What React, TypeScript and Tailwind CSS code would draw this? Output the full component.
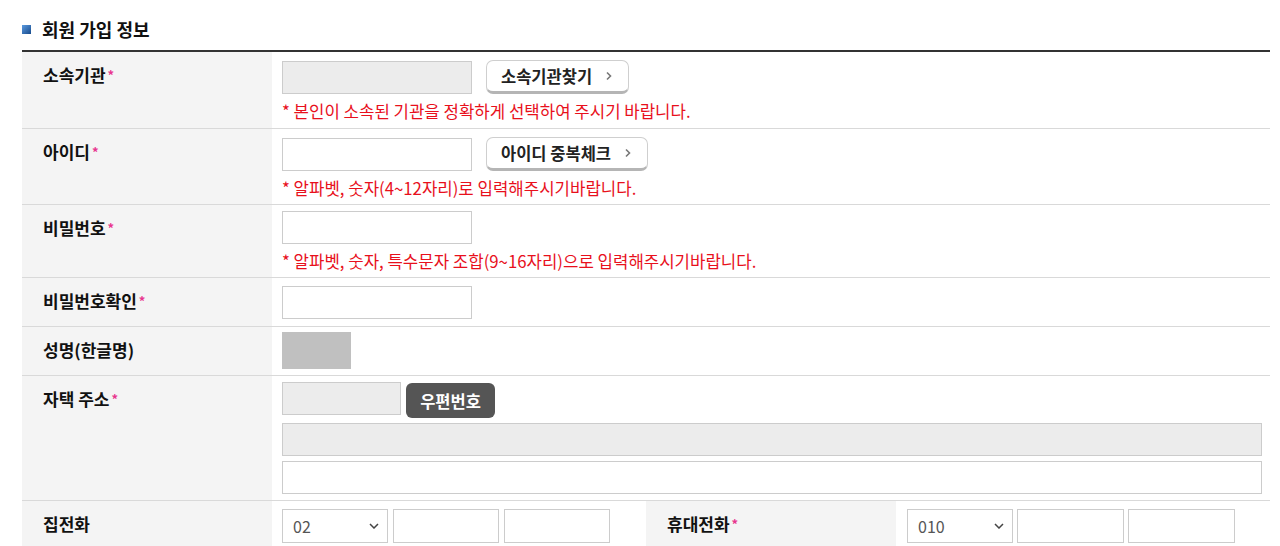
import React from "react";

const FONT = "font-['Noto_Sans_CJK_KR','Noto_Sans',sans-serif]";

function Req() {
  return <span className="ml-[2px] text-[13px] text-[#e8368f] relative top-[-2px]">*</span>;
}

function Chevron() {
  return (
    <svg width="8" height="10" viewBox="0 0 8 10" className="ml-[13px]">
      <polyline points="2,1.5 5.5,5 2,8.5" fill="none" stroke="#777" strokeWidth="1.6" />
    </svg>
  );
}

function WhiteBtn({ children }: { children: React.ReactNode }) {
  return (
    <button className="h-[34px] pl-[14px] pr-[15px] flex items-center bg-white border border-[#cfcfcf] border-b-[3px] border-b-[#b5b5b5] rounded-[7px] text-[16.5px] font-bold text-[#222] leading-[20px]">
      {children}
      <Chevron />
    </button>
  );
}

function Input({ w, gray, h = 33 }: { w: string; gray?: boolean; h?: number }) {
  return (
    <input
      readOnly={gray}
      style={{ height: h }}
      className={`${w} border border-[#cccccc] outline-none ${gray ? "bg-[#ececec]" : "bg-white"}`}
    />
  );
}

function Select({ value }: { value: string }) {
  return (
    <div className="relative w-[106px] h-[34px]">
      <select className="appearance-none w-full h-full border border-[#cccccc] bg-white pl-[10px] text-[16px] text-[#555] outline-none">
        <option>{value}</option>
      </select>
      <svg width="10" height="6" viewBox="0 0 10 6" className="absolute right-[9px] top-[14px] pointer-events-none">
        <polyline points="1,1 5,5 9,1" fill="none" stroke="#444" strokeWidth="1.5" />
      </svg>
    </div>
  );
}

function Help({ children }: { children: React.ReactNode }) {
  return <p className="mt-[7px] text-[16.75px] leading-[20px] text-[#e8101c]">* {children}</p>;
}

function Label({ children, req }: { children: React.ReactNode; req?: boolean }) {
  return (
    <div className="w-[250px] shrink-0 bg-[#f4f4f4] pl-[21px] pt-[13px] text-[17px] font-bold leading-[20px] text-[#111]">
      {children}
      {req && <Req />}
    </div>
  );
}

export default function App() {
  return (
    <div className={`w-[1280px] h-[546px] overflow-hidden bg-white ${FONT}`}>
      <div className="ml-[22px] w-[1248px]">
        <h2 className="h-[50px] pt-[8px] flex items-center text-[18px] font-bold text-[#111]">
          <span className="w-[9px] h-[9px] mr-[11px] bg-gradient-to-br from-[#5b9be0] to-[#174b8c]" />
          회원 가입 정보
        </h2>
        <div className="border-t-2 border-[#333]">
          {/* 소속기관 */}
          <div className="flex border-b border-[#d9d9d9]">
            <Label req>소속기관</Label>
            <div className="flex-1 pl-[10px] pt-[8px] pb-[7px]">
              <div className="flex items-center gap-[14px]">
                <Input w="w-[190px]" gray />
                <WhiteBtn>소속기관찾기</WhiteBtn>
              </div>
              <Help>본인이 소속된 기관을 정확하게 선택하여 주시기 바랍니다.</Help>
            </div>
          </div>
          {/* 아이디 */}
          <div className="flex border-b border-[#d9d9d9]">
            <Label req>아이디</Label>
            <div className="flex-1 pl-[10px] pt-[8px] pb-[6px]">
              <div className="flex items-center gap-[14px]">
                <Input w="w-[190px]" />
                <WhiteBtn>아이디 중복체크</WhiteBtn>
              </div>
              <Help>알파벳, 숫자(4~12자리)로 입력해주시기바랍니다.</Help>
            </div>
          </div>
          {/* 비밀번호 */}
          <div className="flex border-b border-[#d9d9d9]">
            <Label req>비밀번호</Label>
            <div className="flex-1 pl-[10px] pt-[6px] pb-[6px]">
              <Input w="w-[190px]" />
              <Help>알파벳, 숫자, 특수문자 조합(9~16자리)으로 입력해주시기바랍니다.</Help>
            </div>
          </div>
          {/* 비밀번호확인 */}
          <div className="flex border-b border-[#d9d9d9]">
            <Label req>비밀번호확인</Label>
            <div className="flex-1 pl-[10px] pt-[8px] pb-[7px] flex">
              <Input w="w-[190px]" />
            </div>
          </div>
          {/* 성명 */}
          <div className="flex border-b border-[#d9d9d9]">
            <Label>성명(한글명)</Label>
            <div className="flex-1 pl-[10px] pt-[5px] pb-[6px]">
              <div className="w-[69px] h-[37px] bg-[#c0c0c0]" />
            </div>
          </div>
          {/* 자택 주소 */}
          <div className="flex border-b border-[#d9d9d9]">
            <Label req>자택 주소</Label>
            <div className="flex-1 pl-[10px] pr-[8px] pt-[6px] pb-[6px]">
              <div className="flex items-start gap-[5px] h-[35px]">
                <Input w="w-[119px]" gray />
                <button className="mt-[1px] h-[35px] w-[89px] rounded-[6px] bg-[#555555] text-white text-[16.5px] font-bold leading-[20px]">
                  우편번호
                </button>
              </div>
              <div className="mt-[6px] flex">
                <Input w="w-full" gray />
              </div>
              <div className="mt-[5px] flex">
                <Input w="w-full" />
              </div>
            </div>
          </div>
          {/* 전화 */}
          <div className="flex h-[60px]">
            <Label>집전화</Label>
            <div className="w-[374px] pl-[10px] pt-[8px] flex gap-[5px] items-start">
              <Select value="02" />
              <Input w="w-[106px]" h={34} />
              <Input w="w-[106px]" h={34} />
            </div>
            <Label req>휴대전화</Label>
            <div className="flex-1 pl-[11px] pt-[8px] flex gap-[4px] items-start">
              <Select value="010" />
              <Input w="w-[107px]" h={34} />
              <Input w="w-[107px]" h={34} />
            </div>
          </div>
        </div>
      </div>
    </div>
  );
}
